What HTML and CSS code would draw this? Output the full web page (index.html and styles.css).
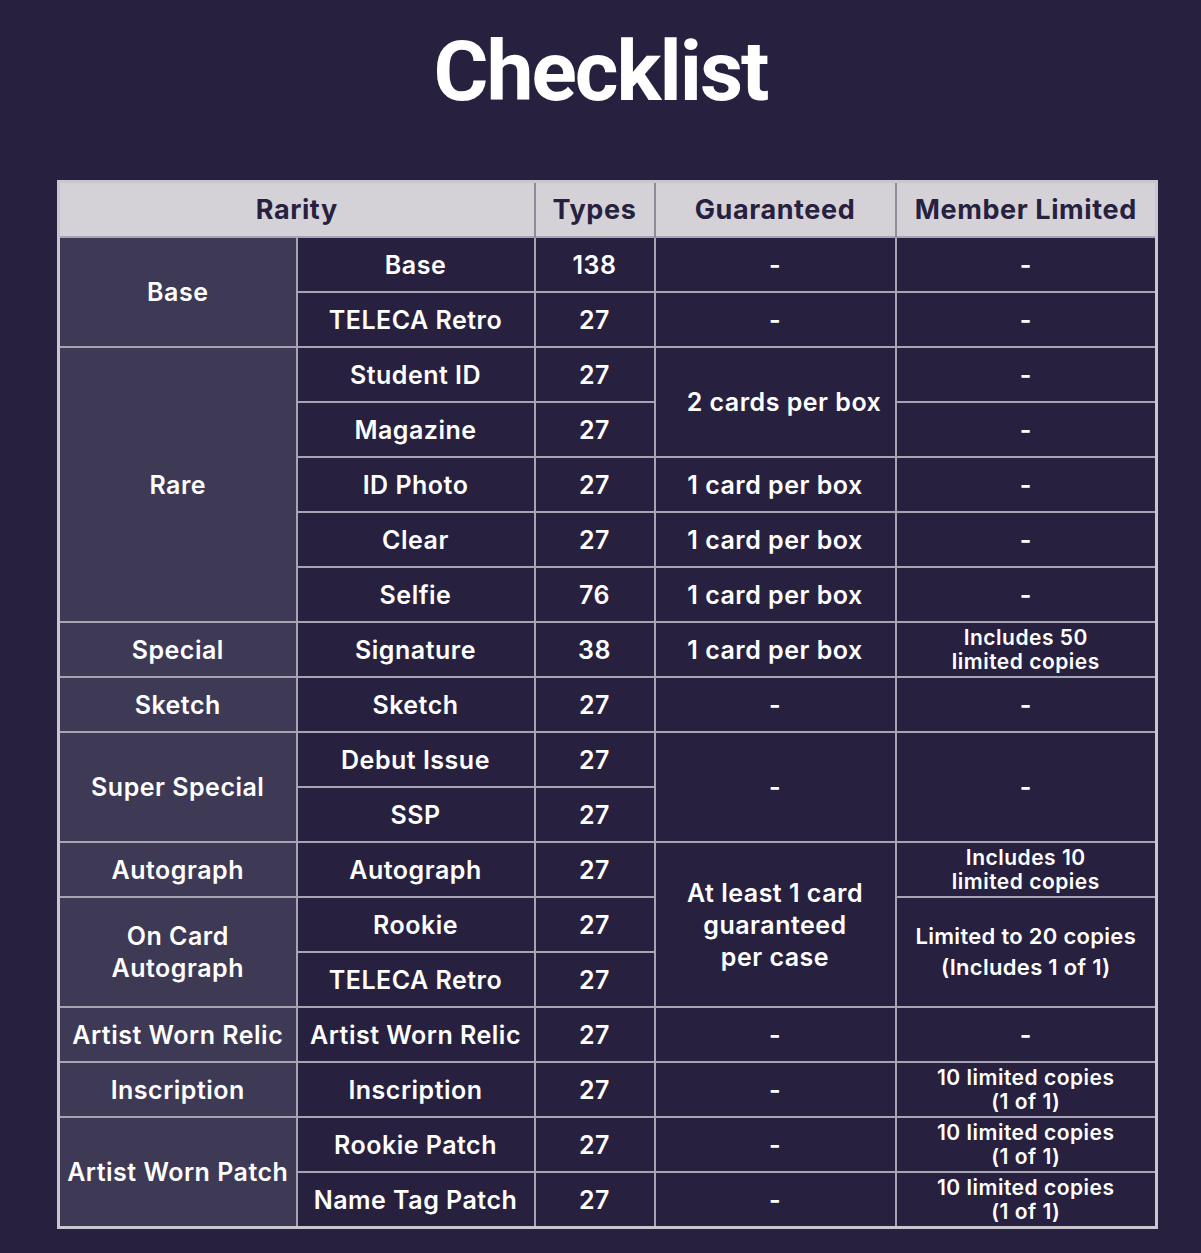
FILE: index.html
```html
<!DOCTYPE html>
<html>
<head>
<meta charset="utf-8">
<link rel="stylesheet" href="styles.css">
</head>
<body>
<h1 class="title">Checklist</h1>
<div class="wrap">
<table class="checklist">
  <colgroup>
    <col class="c1"><col class="c2"><col class="c3"><col class="c4"><col class="c5">
  </colgroup>
  <thead>
    <tr><th colspan="2">Rarity</th><th>Types</th><th>Guaranteed</th><th>Member Limited</th></tr>
  </thead>
  <tbody>
    <tr><td class="cat" rowspan="2">Base</td><td>Base</td><td>138</td><td>-</td><td>-</td></tr>
    <tr><td>TELECA Retro</td><td>27</td><td>-</td><td>-</td></tr>
    <tr><td class="cat" rowspan="5">Rare</td><td>Student ID</td><td>27</td><td rowspan="2" class="shift">2 cards per box</td><td>-</td></tr>
    <tr><td>Magazine</td><td>27</td><td>-</td></tr>
    <tr><td>ID Photo</td><td>27</td><td>1 card per box</td><td>-</td></tr>
    <tr><td>Clear</td><td>27</td><td>1 card per box</td><td>-</td></tr>
    <tr><td>Selfie</td><td>76</td><td>1 card per box</td><td>-</td></tr>
    <tr><td class="cat">Special</td><td>Signature</td><td>38</td><td>1 card per box</td><td class="small">Includes 50<br>limited copies</td></tr>
    <tr><td class="cat">Sketch</td><td>Sketch</td><td>27</td><td>-</td><td>-</td></tr>
    <tr><td class="cat" rowspan="2">Super Special</td><td>Debut Issue</td><td>27</td><td rowspan="2">-</td><td rowspan="2">-</td></tr>
    <tr><td>SSP</td><td>27</td></tr>
    <tr><td class="cat">Autograph</td><td>Autograph</td><td>27</td><td rowspan="3" class="tall">At least 1 card<br>guaranteed<br>per case</td><td class="small">Includes 10<br>limited copies</td></tr>
    <tr><td class="cat tall" rowspan="2">On Card<br>Autograph</td><td>Rookie</td><td>27</td><td rowspan="2" class="mid">Limited to 20 copies<br>(Includes 1 of 1)</td></tr>
    <tr><td>TELECA Retro</td><td>27</td></tr>
    <tr><td class="cat">Artist Worn Relic</td><td>Artist Worn Relic</td><td>27</td><td>-</td><td>-</td></tr>
    <tr><td class="cat">Inscription</td><td>Inscription</td><td>27</td><td>-</td><td class="small">10 limited copies<br>(1 of 1)</td></tr>
    <tr><td class="cat" rowspan="3">Artist Worn Patch</td><td>Rookie Patch</td><td>27</td><td>-</td><td class="small">10 limited copies<br>(1 of 1)</td></tr>
    <tr><td>Name Tag Patch</td><td>27</td><td>-</td><td class="small">10 limited copies<br>(1 of 1)</td></tr>
  </tbody>
</table>
</div>
</body>
</html>
```

FILE: styles.css
```css
html, body {
  margin: 0;
  padding: 0;
  background: #27213f;
}
body {
  width: 1201px;
  height: 1253px;
  font-family: Inter, "Noto Sans", sans-serif;
  color: #ffffff;
}
.title {
  margin: 0;
  padding-top: 28px;
  height: 180px;
  box-sizing: border-box;
  text-align: center;
  font-family: Roboto, "Liberation Sans", sans-serif;
  font-weight: 700;
  font-size: 84px;
  line-height: 88px;
  letter-spacing: -2px;
  color: #ffffff;
}
.wrap {
  padding-left: 57px;
}
.checklist {
  width: 1098px;
  border-collapse: collapse;
  border: 3px solid #c9c6cf;
  table-layout: fixed;
}
.c1 { width: 238px; }
.c2 { width: 238px; }
.c3 { width: 120px; }
.c4 { width: 241px; }
.c5 { width: 261px; }
.checklist th {
  background: #d4d2d7;
  color: #27213f;
  height: 53px;
  font-size: 27px;
  font-weight: 700;
  letter-spacing: 0.6px;
  border-left: 2px solid #8e8a99;
  padding: 0;
}
.checklist th:first-child { border-left: none; }
.checklist td {
  height: 53px;
  padding: 0;
  text-align: center;
  vertical-align: middle;
  font-size: 25px;
  font-weight: 600;
  line-height: 30px;
  letter-spacing: 0.5px;
  border: 2px solid #a7a3b3;
  background: #27213f;
}
.checklist td.cat {
  background: #3e3955;
}
.checklist td.shift {
  padding-left: 18px;
}
.checklist td.small {
  font-size: 21px;
  line-height: 24px;
  letter-spacing: 0.5px;
}
.checklist td.tall {
  line-height: 32px;
}
.checklist td.mid {
  font-size: 22px;
  line-height: 31px;
  letter-spacing: 0.3px;
}
```
